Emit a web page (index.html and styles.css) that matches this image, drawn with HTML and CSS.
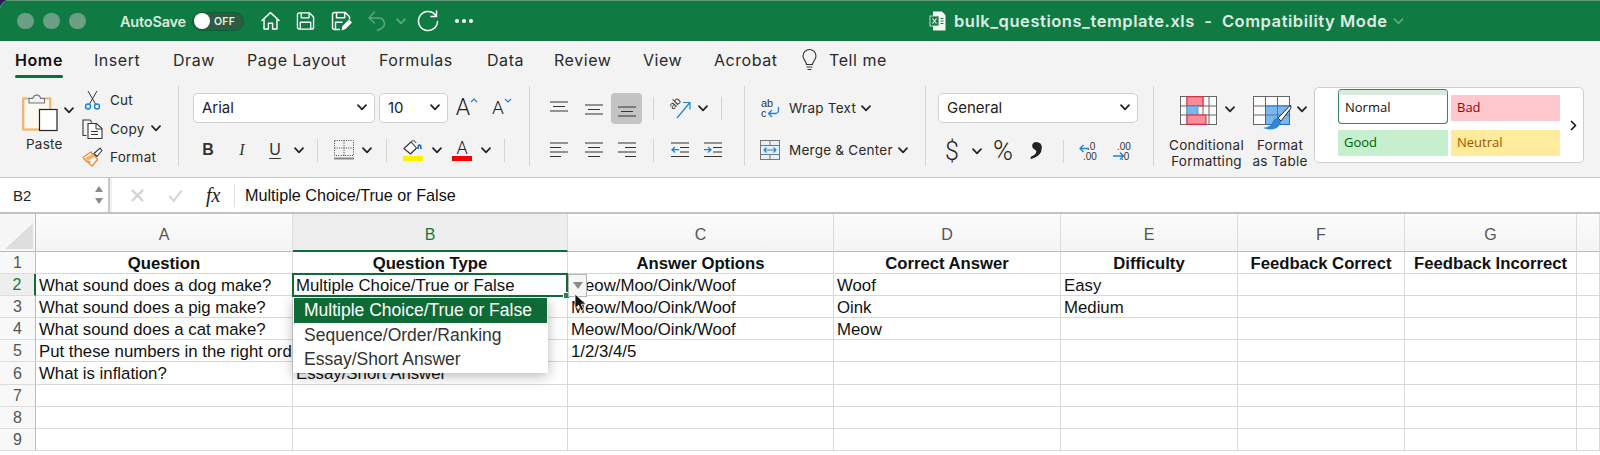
FILE: index.html
```html
<!DOCTYPE html>
<html lang="en">
<head>
<meta charset="utf-8">
<title>bulk_questions_template.xls</title>
<link rel="stylesheet" href="styles.css">
</head>
<body>
<svg class="defs" width="0" height="0" aria-hidden="true"><symbol id="chev" viewBox="0 0 10 7"><path d="M1 1.2 5 5.4 9 1.2" fill="none" stroke="currentColor" stroke-width="1.7" stroke-linecap="round" stroke-linejoin="round"/></symbol></svg>
<div class="app">
  <header class="titlebar">
    <div class="lights"><i></i><i></i><i></i></div>
    <div class="autosave">AutoSave</div>
    <div class="toggle"><i></i><span>OFF</span></div>
    <svg class="ti" viewBox="0 0 20 20"><path d="M1 9.5 10 1.2l9 8.3M3.2 8v10.5h4.6v-6.2h4.4v6.2h4.6V8" fill="none" stroke="#fff" stroke-width="1.5" stroke-linejoin="round" stroke-linecap="round"/></svg>
    <svg class="ti" viewBox="0 0 20 20"><path d="M1.5 3.5a2 2 0 0 1 2-2h10.8l4.2 4.2v10.800a2 2 0 0 1-2 2h-13a2 2 0 0 1-2-2zM5.500 1.700v5h8.200v-5M4.500 18.300v-7h11v7" fill="none" stroke="#fff" stroke-width="1.4" stroke-linejoin="round"/></svg>
    <svg class="ti ti-saveas" viewBox="0 0 21 20"><path d="M9 18.500H3.500a2 2 0 0 1-2-2v-13a2 2 0 0 1 2-2h10.800l4.200 4.200v2.800M5.500 1.700v5h8.200v-5M4.500 18.300v-7h7" fill="none" stroke="#fff" stroke-width="1.400" stroke-linejoin="round"/><path d="M10.500 19.500l1-4.500 6.500-6.500 3 3-6.500 6.500z" fill="#fff"/></svg>
    <svg class="ti ti-undo" viewBox="0 0 18 20"><path d="M1 7h10a5.500 5.500 0 0 1 3 10l-4.500 2.500M6.500 1 1 7l5.500 5" fill="none" stroke="#5da67f" stroke-width="1.500" stroke-linejoin="round" stroke-linecap="round"/></svg>
    <svg class="chev chev-dim"><use href="#chev"/></svg>
    <svg class="ti ti-redo" viewBox="0 0 22 22"><path d="M18.500 5.200A9.500 9.500 0 1 0 20.500 11.500" fill="none" stroke="#fff" stroke-width="1.500" stroke-linecap="round"/><path d="M14 6.500h5.500V1" fill="none" stroke="#fff" stroke-width="1.500" stroke-linecap="round" stroke-linejoin="round"/></svg>
    <div class="dots"><i></i><i></i><i></i></div>
    <div class="doc">
      <svg class="xl" viewBox="0 0 16 20"><path d="M3 .5h9l3.500 3.500v15.500H3z" fill="#f4f8f5"/><rect x="0" y="5" width="9" height="10" fill="#1d7a46" stroke="#e8f2ec" stroke-width=".8"/><path d="M2.500 7.500l4 5m0-5-4 5" stroke="#fff" stroke-width="1.100"/><path d="M10.500 7h3v1h-3zm0 2.500h3v1h-3zm0 2.500h3v1h-3z" fill="#1d7a46"/></svg>
      <span class="doc-name">bulk_questions_template.xls &nbsp;-&nbsp; Compatibility Mode</span>
      <svg class="chev chev-title"><use href="#chev"/></svg>
    </div>
  </header>

  <section class="ribbon">
    <nav class="tabs">
      <span class="tab tab-on">Home</span><span class="tab">Insert</span><span class="tab">Draw</span><span class="tab">Page Layout</span><span class="tab">Formulas</span><span class="tab">Data</span><span class="tab">Review</span><span class="tab">View</span><span class="tab">Acrobat</span>
      <svg class="bulb" viewBox="0 0 15 22"><path d="M4.500 15.500c0-3-3.500-4.500-3.500-8.500a6.500 6.500 0 0 1 13 0c0 4-3.500 5.500-3.500 8.500zM5 18h5M6 20.500h3" fill="none" stroke="#333" stroke-width="1.100" stroke-linecap="round"/></svg>
      <span class="tab">Tell me</span>
    </nav>

    <div class="groups">
      <div class="group g-clip">
        <div class="paste">
          <div class="paste-top">
            <svg class="paste-ic" viewBox="0 0 36 38"><rect x="1.200" y="5.500" width="27" height="31" fill="#fbf8f0" stroke="#f4b36a" stroke-width="2.200"/><path d="M7 10V5.500h4c.5-4.500 7-4.500 7.500 0h4V10z" fill="#f2f2f2" stroke="#777" stroke-width="1.100"/><rect x="17.500" y="16.500" width="17.500" height="21" fill="#fff" stroke="#222" stroke-width="1.200"/></svg>
            <svg class="chev chev-paste"><use href="#chev"/></svg>
          </div>
          <span class="lbl">Paste</span>
        </div>
        <ul class="clip-list">
          <li><svg class="clip-ic" viewBox="0 0 21 20"><path d="M6 1l7.500 13M15 1 7.500 14" fill="none" stroke="#333" stroke-width="1"/><circle cx="6" cy="16.500" r="2.500" fill="none" stroke="#1c83d6" stroke-width="1.400"/><circle cx="15" cy="16.500" r="2.500" fill="none" stroke="#1c83d6" stroke-width="1.400"/></svg><span class="lbl">Cut</span></li>
          <li><svg class="clip-ic" viewBox="0 0 21 20"><path d="M4.500 16.500H1V1h7l2 2.500" fill="none" stroke="#333" stroke-width="1.100"/><path d="M6 4.500h8.500L20 9.500v10H6z" fill="#fff" stroke="#333" stroke-width="1.100"/><path d="M14 4.500v5.500h6M9 12.500h7M9 15.500h7" fill="none" stroke="#333" stroke-width="1"/></svg><span class="lbl">Copy</span><svg class="chev chev-copy"><use href="#chev"/></svg></li>
          <li><svg class="clip-ic" viewBox="0 0 21 20"><path d="M1 10.500 9 5l6.500 7.500-5.500 6.500-3-2.500 1-2-3 .5z" fill="#fff" stroke="#ee8a2c" stroke-width="1.300" stroke-linejoin="round"/><path d="M3 11l7-4 2.500 3-7 4z" fill="#f6b26b"/><path d="M12 6.500 18 1.200l2 2.300-5 6z" fill="#fff" stroke="#333" stroke-width="1.100" stroke-linejoin="round"/></svg><span class="lbl">Format</span></li>
        </ul>
      </div>

      <div class="group g-font">
        <div class="row r-font1">
          <div class="select"><span>Arial</span><svg class="chev"><use href="#chev"/></svg></div>
          <div class="select"><span>10</span><svg class="chev"><use href="#chev"/></svg></div>
          <div class="sizer sizer-up">A<svg viewBox="0 0 8 5"><path d="M1 4 4 1l3 3" fill="none" stroke="#1c83d6" stroke-width="1.200"/></svg></div>
          <div class="sizer sizer-down">A<svg viewBox="0 0 8 5"><path d="M1 1l3 3 3-3" fill="none" stroke="#1c83d6" stroke-width="1.200"/></svg></div>
        </div>
        <div class="row r-font2">
          <span class="ch ch-b">B</span><span class="ch ch-i">I</span><span class="ch ch-u">U</span>
          <svg class="chev"><use href="#chev"/></svg><i class="sep"></i>
          <svg class="ic-border" viewBox="0 0 20 20"><path d="M.5.500h19v15H.5zM10 .5v15M.5 8h19" fill="none" stroke="#444" stroke-width="1" stroke-dasharray="1 1.300"/><path d="M0 18.500h20" stroke="#888" stroke-width="2"/></svg>
          <svg class="chev"><use href="#chev"/></svg><i class="sep"></i>
          <svg class="ic-fill" viewBox="0 0 20 21"><path d="M1 8.500 8 2l5.500 6-6 6z" fill="#fff" stroke="#333" stroke-width="1.100" stroke-linejoin="round"/><path d="M8 2c1-2.200 4.500-1.500 5 1" fill="none" stroke="#333" stroke-width="1"/><path d="M15 9c0-3 .5-4 1.500-4s1.500 1.500 1.500 4" fill="none" stroke="#1b5fb0" stroke-width="1.600"/><rect y="16" width="20" height="5" fill="#ffee00"/></svg>
          <svg class="chev"><use href="#chev"/></svg>
          <div class="fontcolor"><span>A</span><i></i></div>
          <svg class="chev"><use href="#chev"/></svg><i class="sep"></i>
        </div>
      </div>

      <div class="group g-align">
        <div class="row r-align1">
          <svg class="ic-lines" viewBox="0 0 18 18"><path d="M0 2h18M3 6.500h12M0 11h18" stroke="#333" stroke-width="1.100"/></svg>
          <svg class="ic-lines" viewBox="0 0 18 18"><path d="M0 5h18M3 9.500h12M0 14h18" stroke="#333" stroke-width="1.100"/></svg>
          <div class="pressed"><svg class="ic-lines" viewBox="0 0 18 18"><path d="M0 7h18M3 11.500h12M0 16h18" stroke="#333" stroke-width="1.100"/></svg></div>
          <i class="sep"></i>
          <svg class="ic-orient" viewBox="0 0 21 20"><text class="svg-ab" transform="translate(3 11) rotate(-45)">ab</text><path d="M7 19 19.500 4M13 3.500h7v7" fill="none" stroke="#1c83d6" stroke-width="1.200"/></svg>
          <svg class="chev"><use href="#chev"/></svg><i class="sep"></i>
        </div>
        <div class="row r-align2">
          <svg class="ic-lines" viewBox="0 0 18 18"><path d="M0 2h18M0 6.500h11M0 11h18M0 15.500h11" stroke="#333" stroke-width="1.100"/></svg>
          <svg class="ic-lines" viewBox="0 0 18 18"><path d="M0 2h18M3 6.500h12M0 11h18M3 15.500h12" stroke="#333" stroke-width="1.100"/></svg>
          <svg class="ic-lines" viewBox="0 0 18 18"><path d="M0 2h18M7 6.500h11M0 11h18M7 15.500h11" stroke="#333" stroke-width="1.100"/></svg>
          <i class="sep"></i>
          <svg class="ic-lines" viewBox="0 0 18 18"><path d="M0 2h18M9 6.500h9M9 11h9M0 15.500h18" stroke="#333" stroke-width="1.100"/><path d="M8 8.700H1M4 6 1 8.700 4 11.400" fill="none" stroke="#1c83d6" stroke-width="1.300"/></svg>
          <svg class="ic-lines" viewBox="0 0 18 18"><path d="M0 2h18M9 6.500h9M9 11h9M0 15.500h18" stroke="#333" stroke-width="1.100"/><path d="M0 8.700h7M4 6l3 2.700L4 11.400" fill="none" stroke="#1c83d6" stroke-width="1.300"/></svg>
        </div>
      </div>

      <div class="group g-wrap">
        <div class="row r-wrap">
          <svg class="ic-wrap" viewBox="0 0 20 20"><text class="svg-wrap" x="1" y="9">ab</text><text class="svg-wrap" x="1" y="19">c</text><path d="M18.500 9v3.500a3 3 0 0 1-3 3H8.500M12 12l-3.500 3.500L12 19" fill="none" stroke="#1c83d6" stroke-width="1.300"/></svg>
          <span class="lbl">Wrap Text</span><svg class="chev"><use href="#chev"/></svg>
        </div>
        <div class="row r-merge">
          <svg class="ic-merge" viewBox="0 0 20 20"><rect x=".5" y=".5" width="19" height="19" fill="#e3f0fb" stroke="#777"/><path d="M.5 5.500h19M.5 14.500h19M10 .5v5M10 14.500v5" stroke="#777"/><path d="M4 10h12M6.500 7.500 4 10l2.500 2.500M13.500 7.500 16 10l-2.500 2.500" fill="none" stroke="#1c83d6" stroke-width="1.100"/></svg>
          <span class="lbl">Merge &amp; Center</span><svg class="chev"><use href="#chev"/></svg>
        </div>
      </div>

      <div class="group g-num">
        <div class="row r-num1"><div class="select"><span>General</span><svg class="chev"><use href="#chev"/></svg></div></div>
        <div class="row r-num2">
          <span class="numch">$</span><svg class="chev"><use href="#chev"/></svg>
          <span class="numch numch-pct">%</span><span class="comma">,</span><i class="sep"></i>
          <svg class="ic-dec" viewBox="0 0 20 20"><text class="svg-dec" x="8" y="9">.0</text><text class="svg-dec" x="4" y="19">.00</text><path d="M10 7.500H1M4.500 4 1 7.500 4.500 11" fill="none" stroke="#1c83d6" stroke-width="1.300"/></svg>
          <svg class="ic-dec" viewBox="0 0 20 20"><text class="svg-dec" x="4" y="9">.00</text><text class="svg-dec" x="8" y="19">.0</text><path d="M0 15h10M7 11.500l3.500 3.500L7 18.500" fill="none" stroke="#1c83d6" stroke-width="1.300"/></svg>
        </div>
      </div>

      <div class="group g-styles">
        <div class="bigbtn bb-cond">
          <div class="bigtop">
            <svg class="ic-cond" viewBox="0 0 37 29"><rect x=".5" y=".5" width="36" height="28" fill="#fbfbfb" stroke="#666"/><path d="M.5 10h36M.5 19h36M7 .5v28M23 .5v28M29 .5v28" stroke="#666"/><rect x="7" y=".8" width="16" height="9" fill="#f98e98" stroke="#ee2030"/><rect x="7" y="10" width="11" height="9" fill="#7db6e8" stroke="#3f8ed8" stroke-width=".8"/><rect x="7" y="19" width="19" height="9.200" fill="#f98e98" stroke="#ee2030"/></svg>
            <svg class="chev"><use href="#chev"/></svg>
          </div>
          <span class="lbl lbl-big">Conditional<br>Formatting</span>
        </div>
        <div class="bigbtn bb-table">
          <div class="bigtop">
            <svg class="ic-table" viewBox="0 0 38 34"><rect x=".5" y=".5" width="36" height="28" fill="#fbfbfb" stroke="#666"/><path d="M.5 10h36M.5 19h36M12.500 .5v28M24.500 .5v28" stroke="#666"/><rect x="12.500" y="10" width="24" height="18.500" fill="#7db6e8" stroke="#1b6fc9"/><path d="M24.500 10v18.500M12.500 19h24" stroke="#1b6fc9" stroke-width=".8"/><path d="M37.500 9 25 22l3 3L38 12z" fill="#fff" stroke="#222" stroke-width="1" stroke-linejoin="round"/><path d="M25 22c-3 0-5 2-6 5s-4 4-9 5c5 2 12 2 15-1 2-2 3-4 3-6z" fill="#2f84d4"/></svg>
            <svg class="chev"><use href="#chev"/></svg>
          </div>
          <span class="lbl lbl-big">Format<br>as Table</span>
        </div>
        <div class="stylebox">
          <div class="styles">
            <span class="st st-normal">Normal</span><span class="st st-bad">Bad</span>
            <span class="st st-good">Good</span><span class="st st-neutral">Neutral</span>
          </div>
          <svg class="chev-more" viewBox="0 0 7 11"><path d="M1 1l4.500 4.500L1 10" fill="none" stroke="#111" stroke-width="1.500"/></svg>
        </div>
      </div>
    </div>
  </section>

  <section class="formula">
    <div class="namebox"><span>B2</span>
      <div class="stepper"><i class="up"></i><i class="down"></i></div>
    </div>
    <div class="fx-bar">
      <svg class="fx-mark" viewBox="0 0 16 16"><path d="M2 2l12 12M14 2 2 14" stroke="#d4d4d4" stroke-width="2.400"/></svg>
      <svg class="fx-mark" viewBox="0 0 18 16"><path d="M1.500 8.500l5.500 6L16.500 2" fill="none" stroke="#d4d4d4" stroke-width="2.400"/></svg>
      <span class="fx">fx</span>
      <span class="fx-text">Multiple Choice/True or False</span>
    </div>
  </section>

  <section class="sheet">
    <div class="corner"><svg viewBox="0 0 28 26"><path d="M28 0v26H0z" fill="#dedede"/></svg></div>
    <div class="ch-col">A</div><div class="ch-col ch-sel">B</div><div class="ch-col">C</div><div class="ch-col">D</div><div class="ch-col">E</div><div class="ch-col">F</div><div class="ch-col">G</div><div class="ch-col"></div>

    <div class="rh">1</div><div class="c head">Question</div><div class="c head">Question Type</div><div class="c head">Answer Options</div><div class="c head">Correct Answer</div><div class="c head">Difficulty</div><div class="c head">Feedback Correct</div><div class="c head">Feedback Incorrect</div><div class="c"></div>
    <div class="rh rh-sel">2</div><div class="c">What sound does a dog make?</div><div class="c">Multiple Choice/True or False</div><div class="c">Meow/Moo/Oink/Woof</div><div class="c">Woof</div><div class="c">Easy</div><div class="c"></div><div class="c"></div><div class="c"></div>
    <div class="rh">3</div><div class="c">What sound does a pig make?</div><div class="c"></div><div class="c">Meow/Moo/Oink/Woof</div><div class="c">Oink</div><div class="c">Medium</div><div class="c"></div><div class="c"></div><div class="c"></div>
    <div class="rh">4</div><div class="c">What sound does a cat make?</div><div class="c"></div><div class="c">Meow/Moo/Oink/Woof</div><div class="c">Meow</div><div class="c"></div><div class="c"></div><div class="c"></div><div class="c"></div>
    <div class="rh">5</div><div class="c">Put these numbers in the right order</div><div class="c"></div><div class="c">1/2/3/4/5</div><div class="c"></div><div class="c"></div><div class="c"></div><div class="c"></div><div class="c"></div>
    <div class="rh">6</div><div class="c">What is inflation?</div><div class="c">Essay/Short Answer</div><div class="c"></div><div class="c"></div><div class="c"></div><div class="c"></div><div class="c"></div><div class="c"></div>
    <div class="rh">7</div><div class="c"></div><div class="c"></div><div class="c"></div><div class="c"></div><div class="c"></div><div class="c"></div><div class="c"></div><div class="c"></div>
    <div class="rh">8</div><div class="c"></div><div class="c"></div><div class="c"></div><div class="c"></div><div class="c"></div><div class="c"></div><div class="c"></div><div class="c"></div>
    <div class="rh">9</div><div class="c"></div><div class="c"></div><div class="c"></div><div class="c"></div><div class="c"></div><div class="c"></div><div class="c"></div><div class="c"></div>

    <div class="selbox"><i class="handle"></i></div>
    <div class="ddbtn"><i></i></div>
    <ul class="ddlist">
      <li class="dd-on">Multiple Choice/True or False</li>
      <li>Sequence/Order/Ranking</li>
      <li>Essay/Short Answer</li>
    </ul>
    <svg class="cursor" viewBox="0 0 13 19"><path d="M1 1v14.500l3.600-3.300 2.400 5.600 2.700-1.200-2.400-5.400H12z" fill="#111" stroke="#fff" stroke-width=".8"/></svg>
  </section>
</div>
</body>
</html>
```

FILE: styles.css
```css
* { box-sizing: border-box; }
html, body { margin: 0; padding: 0; height: 100%; overflow: hidden; background: #2b1b55; }
.defs { display: block; height: 0; }
ul { list-style: none; margin: 0; padding: 0; }
i { display: block; }
svg { overflow: visible; }
.app { height: 455px; background: #fff; border-top-left-radius: 9px; overflow: hidden; font-family: "Inter", "Liberation Sans", sans-serif; color: #222; }

/* title bar */
.titlebar { height: 41px; background: #107a43; border-top: 1px solid #5f9a7b; display: grid; align-items: center; justify-items: start;
  grid-template-columns: 120px 72px 69px 35px 35px 37px 28px 21px 38px 475px 1fr; }
.lights { display: flex; gap: 9.500px; padding-left: 17px; }
.lights i { width: 16.500px; height: 16.500px; border-radius: 50%; background: #6c9f85; }
.autosave { font-size: 14.500px; font-weight: 600; color: #d9eadf; letter-spacing: -.2px; }
.toggle { width: 52px; height: 19px; border-radius: 10px; background: #2d5c43; display: flex; align-items: center; gap: 4px; padding-left: 1px; border: 1px solid #0c5f34; }
.toggle i { width: 16px; height: 16px; border-radius: 50%; background: #fff; }
.toggle span { font-size: 10.500px; font-weight: 600; color: #e8f0eb; letter-spacing: .3px; }
.ti { width: 19px; height: 20px; }
.ti-saveas { width: 21px; }
.ti-undo { width: 18px; }
.ti-redo { width: 22px; height: 22px; }
.chev { width: 10px; height: 7px; color: #222; display: block; }
.chev-dim { color: #5da67f; }
.dots { display: flex; gap: 3px; }
.dots i { width: 4px; height: 4px; border-radius: 50%; background: #fff; }
.doc { display: flex; align-items: center; }
.xl { width: 16px; height: 20px; margin-right: 8px; }
.doc-name { font-size: 16.500px; font-weight: 600; letter-spacing: .55px; color: #deece4; white-space: nowrap; }
.chev-title { color: #5da67f; margin-left: 5px; width: 11px; }

/* ribbon */
.ribbon { height: 137px; background: #f3f3f3; border-bottom: 1px solid #c6c6c6; border-top: 1px solid #f8f8f8; }
.tabs { height: 36px; margin-bottom: 8px; display: grid; align-items: center; justify-items: start;
  grid-template-columns: 79px 79px 74px 132px 108px 67px 89px 71px 88px 27px auto; padding: 0 0 0 15px; }
.tab { font-size: 16px; color: #2a2a2a; letter-spacing: .55px; position: relative; white-space: nowrap; }
.tab-on { font-weight: 600; color: #111; letter-spacing: .6px; }
.tab-on::after { content: ""; position: absolute; left: 0; right: 0; bottom: -8px; height: 3px; border-radius: 2px; background: #106b3b; }
.bulb { width: 15px; height: 22px; }
.groups { display: flex; height: 80px; }
.group { height: 80px; border-right: 1px solid #d6d6d6; flex: none; }
.row { display: grid; align-items: center; justify-items: center; height: 30px; }
.sep { width: 1px; height: 23px; background: #d4d4d4; }
.lbl { font-size: 13.500px; color: #2a2a2a; white-space: nowrap; letter-spacing: .25px; }

.g-clip { width: 179px; display: flex; padding-left: 22px; }
.paste { width: 57px; }
.paste-top { display: flex; align-items: flex-start; padding-top: 7px; height: 50px; }
.paste-ic { width: 36px; height: 38px; flex: none; }
.chev-paste { margin: 14px 0 0 6px; flex: none; }
.paste .lbl { display: block; margin-left: 4px; }
.clip-list { display: flex; flex-direction: column; padding: 0 0 0 3px; }
.clip-list li { height: 28.500px; flex: none; display: flex; align-items: center; }
.clip-ic { width: 21px; height: 20px; margin-right: 7px; }
.chev-copy { margin-left: 6px; }

.g-font { width: 351px; padding: 7px 0 0 14px; }
.select { width: 100%; height: 30px; background: #fff; border: 1px solid #d0d0d0; border-radius: 5px; display: flex; align-items: center; justify-content: space-between; padding: 0 7px 2px 8px; font-size: 15px; color: #222; }
.r-font1 { grid-template-columns: 182px 69px 30px 32px; column-gap: 4px; }
.r-font2 { grid-template-columns: 30px 38px 28px 20px 17px 36px 10px 28px 26px 22px 28px 20px 16px; margin-top: 12px; }
.sizer { font-family: "Roboto", sans-serif; font-weight: 300; color: #222; display: flex; align-items: flex-start; line-height: 22px; }
.sizer svg { width: 8px; height: 5px; margin-top: 1px; }
.sizer-up { font-size: 23px; }
.sizer-down { font-size: 19px; }
.ch { font-size: 16px; color: #333; font-family: "Liberation Sans", sans-serif; }
.ch-b { font-weight: 700; }
.ch-i { font-family: "Liberation Serif", serif; font-style: italic; }
.ch-u { text-decoration: underline; text-underline-offset: 3px; text-decoration-thickness: 1px; }
.ic-border { width: 20px; height: 20px; }
.ic-fill { width: 20px; height: 21px; }
.fontcolor { display: flex; flex-direction: column; align-items: center; width: 20px; }
.fontcolor span { font-family: "Roboto", sans-serif; font-weight: 300; font-size: 18px; line-height: 16px; }
.fontcolor i { width: 20px; height: 5px; background: #f40000; }

.g-align { width: 215px; padding: 7px 0 0 11px; }
.r-align1 { grid-template-columns: 35px 35px 31px 22px 32px 14px 22px; }
.r-align2 { grid-template-columns: 35px 35px 31px 22px 32px 34px; margin-top: 12px; }
.ic-lines { width: 18px; height: 18px; display: block; }
.pressed { width: 31px; height: 31px; background: #c4c4c4; border-radius: 4px; display: flex; align-items: center; justify-content: center; }
.ic-orient { width: 21px; height: 20px; }
.svg-ab { font: 11px "Liberation Sans", sans-serif; fill: #333; }
.svg-wrap { font: 11px "Liberation Sans", sans-serif; fill: #333; }
.svg-dec { font: 10px "Liberation Sans", sans-serif; fill: #333; }

.g-wrap { width: 181px; padding: 7px 0 0 15px; }
.r-wrap { grid-template-columns: 29px 72px 14px; justify-items: start; }
.r-merge { grid-template-columns: 29px 109px 16px; justify-items: start; margin-top: 12px; }
.ic-wrap, .ic-merge { width: 20px; height: 20px; }

.g-num { width: 228px; padding: 7px 0 0 12px; }
.r-num1 { width: 200px; grid-template-columns: 1fr; }
.r-num2 { grid-template-columns: 28px 22px 30px 38px 14px 38px 30px; margin-top: 12px; }
.numch { font-family: "Roboto", sans-serif; font-weight: 300; font-size: 25px; color: #222; }
.numch-pct { font-size: 27px; }
.comma { font-family: "Liberation Serif", serif; font-weight: 700; font-size: 56px; line-height: 30px; height: 30px; margin-top: -40px; color: #222; }
.ic-dec { width: 20px; height: 20px; }

.g-styles { display: flex; border-right: 0; width: 446px; padding-left: 16px; }
.bigbtn { display: flex; flex-direction: column; align-items: center; padding-top: 10px; }
.bb-cond { width: 73px; margin-right: 7px; }
.bb-table { width: 60px; margin-right: 4px; }
.bigtop { display: flex; align-items: flex-start; height: 41px; width: 54px; gap: 8px; flex: none; }
.bigtop .chev { margin-top: 10px; flex: none; }
.ic-cond { width: 37px; height: 29px; flex: none; }
.ic-table { width: 38px; height: 34px; flex: none; margin-right: -2px; }
.lbl-big { text-align: center; line-height: 16px; }
.stylebox { width: 270px; height: 76px; margin-top: 1px; border: 1px solid #cfcfcf; border-radius: 5px; background: #fff; display: flex; align-items: center; padding-left: 23px; }
.styles { display: grid; grid-template-columns: 110px 109px; column-gap: 3px; row-gap: 9px; grid-auto-rows: 26px; }
.st { font-family: "Open Sans", sans-serif; font-size: 13px; display: flex; align-items: center; padding-left: 6px; padding-bottom: 1px; }
.st-normal { background: #fff; color: #111; height: 34px; margin-top: -5px; border: 1px solid #2f8a5a; border-top: 5px solid #dbe9e0; border-radius: 4px; box-shadow: 0 -1px 0 #2f8a5a; padding-bottom: 3px; }
.st-bad { background: #ffc7ce; color: #9c0006; }
.st-good { background: #c6efce; color: #006100; }
.st-neutral { background: #ffeb9c; color: #9c5700; }
.chev-more { width: 7px; height: 11px; margin-left: 10px; }

/* formula bar */
.formula { height: 36px; display: flex; background: #f0f0f0; border-bottom: 2px solid #c2c2c2; }
.namebox { width: 110px; background: #fff; display: flex; justify-content: space-between; align-items: center; padding: 0 5px 0 13px; font-size: 15px; border-right: 2px solid #c8c8c8; font-family: "Liberation Sans", sans-serif; }
.stepper { display: flex; flex-direction: column; gap: 6px; }
.stepper i { width: 0; height: 0; border-left: 4.500px solid transparent; border-right: 4.500px solid transparent; }
.stepper .up { border-bottom: 6px solid #8a8a8a; }
.stepper .down { border-top: 6px solid #8a8a8a; }
.fx-bar { flex: 1; margin-left: 2px; background: #fff; display: grid; grid-template-columns: 50px 26px 47px 1fr; align-items: center; justify-items: center; }
.fx-mark { width: 15px; height: 15px; }
.fx { font-family: "Liberation Serif", serif; font-style: italic; font-size: 20px; color: #222; border-right: 1px solid #e2e2e2; width: 100%; text-align: left; padding-left: 18px; }
.fx-text { justify-self: start; padding-left: 10px; font-family: "Liberation Sans", sans-serif; font-size: 16.200px; color: #111; }

/* sheet */
.sheet { position: relative; display: grid; grid-template-columns: 36px 257px 275px 266px 227px 177px 167px 172px 23px; grid-template-rows: 38px repeat(9, 22.100px); font-family: "Liberation Sans", sans-serif; background: #fff; }
.corner { background: #f7f7f7; border-right: 1px solid #bcbcbc; border-bottom: 1px solid #bcbcbc; display: flex; align-items: flex-end; padding: 0 2px 2px 5px; }
.corner svg { width: 28px; height: 26px; }
.ch-col { background: linear-gradient(#fcfcfc, #f4f4f4); border-right: 1px solid #dcdcdc; border-bottom: 1px solid #bcbcbc; display: flex; align-items: center; justify-content: center; font-size: 16px; color: #555; padding-top: 5px; }
.ch-sel { background: #eeeeee; color: #107a43; border-bottom: 2px solid #106b3b; }
.rh { background: #f8f8f8; border-right: 1px solid #bcbcbc; border-bottom: 1px solid #dcdcdc; display: flex; align-items: center; justify-content: center; font-size: 16px; color: #555; padding-top: 1px; }
.rh-sel { background: #eeeeee; color: #107a43; border-right: 2px solid #106b3b; }
.c { border-right: 1px solid #d8d8d8; border-bottom: 1px solid #d8d8d8; font-size: 16.800px; color: #111; line-height: 21px; padding: 1px 0 0 3px; white-space: nowrap; overflow: hidden; }
.head { font-weight: 700; font-size: 16.700px; text-align: center; padding: 1px 0 0; }
.selbox { position: absolute; left: 292px; top: 59px; width: 276px; height: 24px; border: 2px solid #106b3b; pointer-events: none; }
.handle { position: absolute; right: -4px; bottom: -4px; width: 7px; height: 7px; background: #1b8a52; border: 1px solid #fff; }
.ddbtn { position: absolute; left: 568px; top: 60px; width: 19px; height: 23px; background: #f6f6f6; border: 1px solid #b4b4b4; display: flex; align-items: center; justify-content: center; }
.ddbtn i { width: 0; height: 0; border-left: 5.500px solid transparent; border-right: 5.500px solid transparent; border-top: 7px solid #8c8c8c; }
.ddlist { position: absolute; left: 293px; top: 84px; width: 255px; height: 75px; background: #fff; padding: 0 0 0 1px; box-shadow: 0 3px 12px rgba(0,0,0,.28); font-size: 17.500px; color: #333; }
.ddlist li { height: 24.500px; line-height: 24.500px; padding-left: 10px; white-space: nowrap; }
.ddlist .dd-on { background: #0f6b36; color: #fff; margin-right: 1px; }
.cursor { position: absolute; left: 574px; top: 79px; width: 13px; height: 19px; }
```
